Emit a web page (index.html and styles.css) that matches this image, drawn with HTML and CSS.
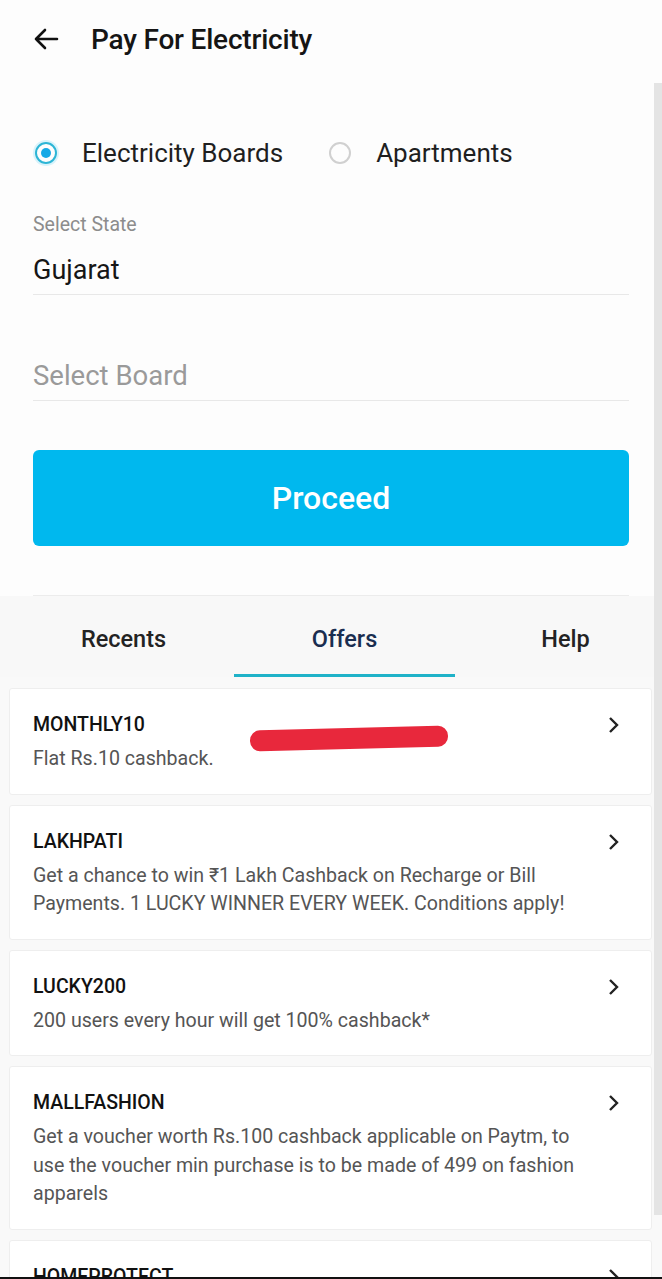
FILE: index.html
```html
<!DOCTYPE html>
<html>
<head>
<meta charset="utf-8">
<link rel="stylesheet" href="styles.css">
</head>
<body>
<div class="page">
  <header class="topbar">
    <svg class="back" width="26" height="22" viewBox="0 0 26 22"><path d="M24 11H3M12 2L3 11l9 9" fill="none" stroke="#111" stroke-width="2.6" stroke-linecap="round" stroke-linejoin="round"/></svg>
    <h1 class="title">Pay For Electricity</h1>
  </header>

  <section class="form">
    <div class="radios">
      <label class="radio">
        <span class="dot checked"></span>
        <span class="rlabel">Electricity Boards</span>
      </label>
      <label class="radio">
        <span class="dot"></span>
        <span class="rlabel">Apartments</span>
      </label>
    </div>

    <div class="field">
      <div class="flabel">Select State</div>
      <div class="fvalue">Gujarat</div>
    </div>

    <div class="field field2">
      <div class="fplaceholder">Select Board</div>
    </div>

    <button class="proceed">Proceed</button>
    <div class="divider"></div>
  </section>

  <nav class="tabs">
    <div class="tab">Recents</div>
    <div class="tab active">Offers</div>
    <div class="tab">Help</div>
  </nav>

  <section class="offers">
    <div class="card">
      <div class="ctext">
        <div class="ctitle">MONTHLY10</div>
        <div class="cdesc">Flat Rs.10 cashback.</div>
      </div>
      <svg class="chev" width="12" height="18" viewBox="0 0 12 18"><path d="M2 2l7 7-7 7" fill="none" stroke="#222" stroke-width="2.4"/></svg>
      <span class="redact"></span>
    </div>
    <div class="card">
      <div class="ctext">
        <div class="ctitle">LAKHPATI</div>
        <div class="cdesc">Get a chance to win ₹1 Lakh Cashback on Recharge or Bill Payments. 1 LUCKY WINNER EVERY WEEK. Conditions apply!</div>
      </div>
      <svg class="chev" width="12" height="18" viewBox="0 0 12 18"><path d="M2 2l7 7-7 7" fill="none" stroke="#222" stroke-width="2.4"/></svg>
    </div>
    <div class="card">
      <div class="ctext">
        <div class="ctitle">LUCKY200</div>
        <div class="cdesc">200 users every hour will get 100% cashback*</div>
      </div>
      <svg class="chev" width="12" height="18" viewBox="0 0 12 18"><path d="M2 2l7 7-7 7" fill="none" stroke="#222" stroke-width="2.4"/></svg>
    </div>
    <div class="card">
      <div class="ctext">
        <div class="ctitle">MALLFASHION</div>
        <div class="cdesc">Get a voucher worth Rs.100 cashback applicable on Paytm, to use the voucher min purchase is to be made of 499 on fashion apparels</div>
      </div>
      <svg class="chev" width="12" height="18" viewBox="0 0 12 18"><path d="M2 2l7 7-7 7" fill="none" stroke="#222" stroke-width="2.4"/></svg>
    </div>
    <div class="card">
      <div class="ctext">
        <div class="ctitle">HOMEPROTECT</div>
        <div class="cdesc">Get home protection cover with your bill payment.</div>
      </div>
      <svg class="chev" width="12" height="18" viewBox="0 0 12 18"><path d="M2 2l7 7-7 7" fill="none" stroke="#222" stroke-width="2.4"/></svg>
    </div>
  </section>

  <div class="scrollbar"></div>
  <div class="bottomline"></div>
</div>
</body>
</html>
```

FILE: styles.css
```css
html, body {
  margin: 0;
  padding: 0;
}
body {
  background: #fdfdfd;
  font-family: Roboto, "Noto Sans", Arial, sans-serif;
  color: #1a1a1a;
}
.page {
  position: relative;
  width: 662px;
  height: 1279px;
  overflow: hidden;
}
.topbar {
  height: 78px;
  display: flex;
  align-items: center;
  padding-left: 33px;
  box-sizing: border-box;
}
.back {
  display: block;
}
.title {
  margin: 0 0 0 32px;
  font-size: 28px;
  font-weight: 500;
  color: #151515;
  letter-spacing: -0.2px;
}
.form {
  padding: 0 33px;
}
.radios {
  display: flex;
  align-items: center;
  height: 54px;
  margin-top: 48px;
}
.radio {
  display: flex;
  align-items: center;
  margin-right: 44px;
}
.dot {
  width: 22px;
  height: 22px;
  box-sizing: border-box;
  border: 2px solid #d0d0d0;
  border-radius: 50%;
  margin-left: 2px;
  margin-right: 25px;
  position: relative;
}
.dot.checked {
  border-color: #2cb5d6;
  box-shadow: 0 0 0 2px #d8f3fb;
}
.dot.checked::after {
  content: "";
  position: absolute;
  left: 4px;
  top: 4px;
  width: 10px;
  height: 10px;
  border-radius: 50%;
  background: #16a9e6;
}
.rlabel {
  font-size: 26px;
  color: #1f1f1f;
}
.field {
  border-bottom: 1.5px solid #e8e8e8;
}
.flabel {
  margin-top: 34px;
  font-size: 19.5px;
  color: #8c8c8c;
  line-height: 22px;
}
.fvalue {
  margin-top: 16px;
  font-size: 27px;
  color: #161616;
  line-height: 36px;
  padding-bottom: 6px;
}
.field2 {
  margin-top: 63px;
}
.fplaceholder {
  font-size: 27.5px;
  color: #9a9a9a;
  line-height: 36px;
  padding-bottom: 6px;
}
.proceed {
  display: block;
  width: 100%;
  height: 96px;
  margin-top: 49px;
  border: none;
  border-radius: 6px;
  background: #00b8ee;
  color: #ffffff;
  font-family: Roboto, "Noto Sans", Arial, sans-serif;
  font-size: 32px;
  font-weight: 500;
}
.divider {
  height: 1px;
  background: #ececec;
  margin-top: 49px;
}
.tabs {
  display: flex;
  background: #f8f8f8;
  height: 81px;
  padding-left: 13px;
}
.tab {
  flex: none;
  width: 221px;
  display: flex;
  align-items: center;
  justify-content: center;
  font-size: 23.5px;
  font-weight: 500;
  color: #232323;
  box-sizing: border-box;
  padding-top: 4px;
}
.tab.active {
  color: #1a2e50;
  position: relative;
}
.tab.active::after {
  content: "";
  position: absolute;
  left: 0;
  right: 0;
  bottom: 0;
  height: 3px;
  background: #1fb2c8;
}
.offers {
  background: #f9f9f9;
  padding: 11px 10px 0 9px;
  display: flex;
  flex-direction: column;
  gap: 10px;
}
.card {
  position: relative;
  background: #ffffff;
  border: 1px solid #eeeeee;
  border-radius: 3px;
  display: flex;
  align-items: flex-start;
  padding: 24px 31px 20px 23px;
}
.ctext {
  flex: 1;
}
.ctitle {
  font-size: 19.5px;
  font-weight: 500;
  color: #111;
  line-height: 24px;
}
.cdesc {
  margin-top: 8px;
  font-size: 19.6px;
  color: #555;
  line-height: 28.5px;
  max-width: 552px;
}
.chev {
  margin-top: 3px;
  flex: none;
}
.redact {
  position: absolute;
  left: 240px;
  top: 39px;
  width: 198px;
  height: 21px;
  background: #e8283c;
  border-radius: 10px;
  transform: rotate(-1.5deg);
}
.scrollbar {
  position: absolute;
  right: 0;
  top: 83px;
  width: 8px;
  height: 1132px;
  background: #e4e4e4;
}
.bottomline {
  position: absolute;
  left: 0;
  right: 0;
  bottom: 0;
  height: 2px;
  background: #111;
}
```
